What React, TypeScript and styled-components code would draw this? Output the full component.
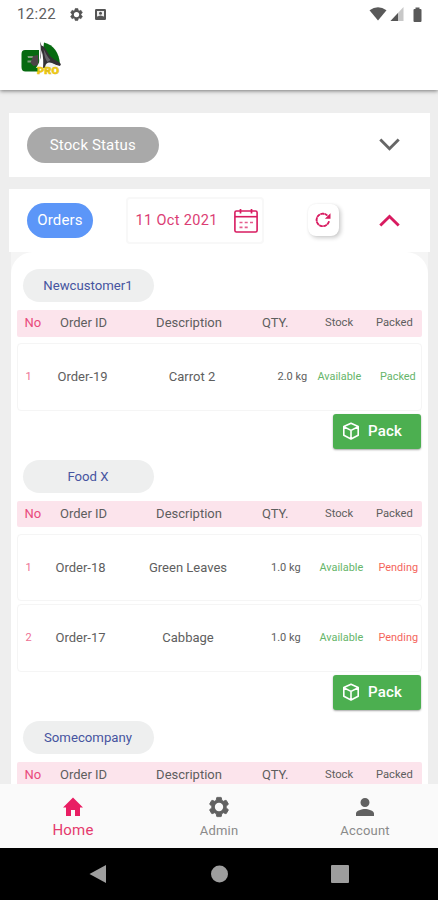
import React from "react";
import styled, { createGlobalStyle } from "styled-components";

const Global = createGlobalStyle`
  * { box-sizing: border-box; }
  body { margin: 0; background: #eee; font-family: Roboto, "Liberation Sans", sans-serif; }
  svg { display: block; flex: none; }
`;

const Screen = styled.div`
  display: flex;
  flex-direction: column;
  width: 438px;
  height: 900px;
  overflow: hidden;
  background: #eeeeee;
`;

const Top = styled.header`
  flex: none;
  height: 90px;
  background: #fff;
  box-shadow: 0 1px 4px rgba(0, 0, 0, 0.5);
`;

const StatusBar = styled.div`
  display: flex;
  align-items: center;
  height: 28px;
  padding: 0 15px 0 17px;
  color: #555;
`;

const Clock = styled.span`
  width: 52px;
  font-size: 15px;
  letter-spacing: 0.35px;
  color: #606060;
`;

const StatusIcons = styled.div<{ $gap: number; $push?: boolean }>`
  display: flex;
  align-items: center;
  gap: ${(p) => p.$gap}px;
  margin-left: ${(p) => (p.$push ? "auto" : "0")};
`;

const Brand = styled.div`
  padding: 12px 0 0 20px;
`;

const Body = styled.main`
  flex: 1;
  min-height: 0;
  overflow: hidden;
  padding: 22.5px 8.5px 0 9px;
  display: flex;
  flex-direction: column;
`;

const Card = styled.section`
  flex: none;
  display: flex;
  align-items: center;
  height: 64.5px;
  padding: 0 30px 0 18px;
  background: #fff;
  justify-content: space-between;
`;

const OrdersBar = styled(Card)`
  margin-top: 11.5px;
  height: 63.5px;
  justify-content: flex-start;
`;

const Pill = styled.span<{ $w: number; $bg: string }>`
  flex: none;
  display: flex;
  align-items: center;
  justify-content: center;
  width: ${(p) => p.$w}px;
  height: 35.5px;
  border-radius: 18px;
  background: ${(p) => p.$bg};
  color: #fff;
  font-size: 15px;
  letter-spacing: 0.15px;
`;

const DateField = styled.div`
  flex: none;
  display: flex;
  align-items: center;
  justify-content: space-between;
  width: 138px;
  height: 47px;
  margin-left: 33px;
  padding: 0 4px 0 7.5px;
  border: 2px solid #f8f8f8;
  border-radius: 4px;
  color: #db3d73;
  font-size: 14.5px;
  letter-spacing: 0.35px;
  white-space: nowrap;
`;

const RefreshButton = styled.button`
  display: flex;
  align-items: center;
  justify-content: center;
  width: 32px;
  height: 32px;
  margin: 0 39.5px 0 43.5px;
  padding: 0;
  border: 0;
  border-radius: 8px;
  background: #fff;
  box-shadow: 2px 2px 4px rgba(0, 0, 0, 0.2), 0 0 2px rgba(0, 0, 0, 0.06);
`;

const ListWrap = styled.section`
  flex: none;
  margin: 0 2px;
  background: linear-gradient(#f5f5f5 0 30px, #fff 30px);
`;

const List = styled.div`
  padding: 17px 6px 0 6px;
  border-radius: 22px 22px 0 0;
  background: #fff;
`;

const Group = styled.div`
  display: flex;
  flex-direction: column;
  padding-bottom: 10.5px;
`;

const Customer = styled.div`
  display: flex;
  align-items: center;
  justify-content: center;
  width: 131px;
  height: 33px;
  margin: 0 0 8px 5.5px;
  border-radius: 17px;
  background: #eeefef;
  color: #4654a0;
  font-size: 13.2px;
`;

const HeadRow = styled.div`
  display: grid;
  grid-template-columns: 35.5px 56px 146px 63px 51px 1fr;
  align-items: center;
  height: 26.5px;
  padding: 0 0 1px 7.5px;
  margin-bottom: 6.5px;
  border-radius: 2px;
  background: #fce4ec;
  white-space: nowrap;
`;

const Row = styled.div<{ $cols: string }>`
  display: grid;
  grid-template-columns: ${(p) => p.$cols};
  align-items: center;
  height: 67.5px;
  margin-bottom: 3px;
  padding-left: 7.5px;
  border: 1.5px solid #f5f5f5;
  border-radius: 4px;
  white-space: nowrap;
`;

const Cell = styled.span<{ $size?: number; $color?: string; $center?: boolean }>`
  font-size: ${(p) => p.$size ?? 13}px;
  color: ${(p) => p.$color ?? "#5e5e5e"};
  text-align: ${(p) => (p.$center ? "center" : "left")};
`;

const PackButton = styled.button`
  align-self: flex-end;
  display: flex;
  align-items: center;
  gap: 8px;
  width: 88px;
  height: 35.5px;
  margin-right: 0.5px;
  padding: 0 0 0 9px;
  border: 0;
  border-radius: 3px;
  background: #4caf50;
  box-shadow: 0 1px 2px rgba(0, 0, 0, 0.35);
  color: #fff;
  font: 500 15px Roboto, sans-serif;
  letter-spacing: 0.2px;
`;

const Tabs = styled.nav`
  flex: none;
  display: grid;
  grid-template-columns: repeat(3, 1fr);
  height: 63.5px;
  background: #fafafa;
`;

const Tab = styled.a<{ $active?: boolean }>`
  display: flex;
  flex-direction: column;
  align-items: center;
  padding-top: 11px;
  gap: ${(p) => (p.$active ? 2.5 : 3)}px;
  color: ${(p) => (p.$active ? "#e53a6e" : "#8a8a8a")};
  font-size: ${(p) => (p.$active ? 15 : 13)}px;
  line-height: 17px;
  letter-spacing: 0.2px;
`;

const SystemNav = styled.footer`
  flex: none;
  display: flex;
  align-items: center;
  height: 52.5px;
  padding-left: 89px;
  background: #000;
`;

const NavKey = styled.svg<{ $after: number }>`
  margin-right: ${(p) => p.$after}px;
`;

const GEAR =
  "M19.14 12.94c.04-.3.06-.61.06-.94 0-.32-.02-.64-.07-.94l2.03-1.58a.49.49 0 0 0 .12-.61l-1.92-3.32a.49.49 0 0 0-.59-.22l-2.39.96c-.5-.38-1.03-.7-1.62-.94l-.36-2.54a.48.48 0 0 0-.48-.41h-3.84c-.24 0-.43.17-.47.41l-.36 2.54c-.59.24-1.13.57-1.62.94l-2.39-.96a.48.48 0 0 0-.59.22L2.74 8.87c-.12.21-.08.47.12.61l2.03 1.58c-.05.3-.09.63-.09.94s.02.64.07.94l-2.03 1.58a.49.49 0 0 0-.12.61l1.92 3.32c.12.22.37.29.59.22l2.39-.96c.5.38 1.03.7 1.62.94l.36 2.54c.05.24.24.41.48.41h3.84c.24 0 .44-.17.47-.41l.36-2.54c.59-.24 1.13-.56 1.62-.94l2.39.96c.22.08.47 0 .59-.22l1.92-3.32a.48.48 0 0 0-.12-.61z";

const Gear = ({ size, color, hole, r }: { size: number; color: string; hole: string; r: number }) => (
  <svg width={size} height={size} viewBox="0 0 24 24">
    <path d={GEAR} fill={color} stroke={color} strokeWidth=".9" />
    <circle cx="12" cy="12" r={r} fill={hole} />
  </svg>
);

const Logo = () => (
  <svg width="42" height="37" viewBox="0 0 42 37">
    <path d="M5 10h14v21.500H5.500Q1.500 31.500 1.500 27V14Q1.500 10 5 10z" fill="#066a10" />
    <path d="M24 2.500C34 5 39 13 40 24L27 23 23 10z" fill="#066a10" />
    <path d="M7.500 16H14l-1 2H8zM7.500 20.500H13l-1 2H7.500z" fill="#7f9f7c" />
    <path d="M18 15l-5 1-2.500 7 3 3 5-1z" fill="#4c4346" />
    <path d="M20 1.500l1.500 4C26 7 27 13 31 17c3 3 7 4 10 7l-1 2-8-2-8 4h-5l1-10c1-5 1-10 0-16.500z" fill="#333135" />
    <path d="M21.500 10c2 7 2 12 1.500 18h-7c3.500-5 5-10 5.500-18z" fill="#fff" />
    <path d="M23.500 9c2 3 3 7 7 11l-3 2c-3-4-3-8-4-13z" fill="#66646a" />
    <path d="M25 27c1-5 4-5 7-4l6 3-1 2z" fill="#f2f2f2" />
    <text x="17" y="34" textLength="22" lengthAdjust="spacingAndGlyphs" fontFamily="Roboto, sans-serif" fontSize="9.5" fontWeight="900" fill="#f4cf14" stroke="#dfba10" strokeWidth=".5">PRO</text>
  </svg>
);

const Chevron = ({ up }: { up?: boolean }) => (
  <svg width="21" height="13" viewBox="0 0 21 13">
    <path d={up ? "M1.3 11.5 10.5 2.5l9.2 9" : "M1.3 1.5 10.5 10.7l9.2-9.2"} fill="none" stroke={up ? "#d81b60" : "#666"} strokeWidth="2.9" />
  </svg>
);

const Calendar = () => (
  <svg width="24" height="25" viewBox="0 0 24 25" fill="none" stroke="#d81b60" strokeWidth="1.6">
    <rect x=".9" y="3" width="22.2" height="21" rx="1.5" />
    <path d="M1 8.7h22" />
    <path d="M6.5 1v4.5M17.5 1v4.5" strokeWidth="1.7" />
    <path d="M5.500 14.500h3M10.700 14.500h3M16 14.500h3M5.500 19.300h3M10.700 19.300h3" strokeWidth="1.700" opacity=".7" />
  </svg>
);

const Refresh = () => (
  <svg width="16" height="16" viewBox="0 0 16 16">
    <path d="M14 9.300A6.300 6.300 0 1 1 12.300 3.500" fill="none" stroke="#d81b60" strokeOpacity=".55" strokeWidth="1.600" />
    <path d="M14 9.300A6.300 6.300 0 1 1 12.300 3.500" fill="none" stroke="#d81b60" strokeWidth="1.700" strokeDasharray="3.500 .8" />
    <path d="M15.500 1.200v5.600H9.900l2-2z" fill="#d81b60" />
  </svg>
);

const Box = () => (
  <svg width="18" height="18" viewBox="0 0 18 18" fill="none" stroke="#fff" strokeWidth="1.6" strokeLinejoin="round">
    <path d="M9 1.200l7.200 3.300v8.800L9 17l-7.200-3.700V4.500zM1.800 4.700 9 8.400l7.200-3.700M9 8.400V17" />
  </svg>
);

type Item = { no: string; id: string; name: string; qty: string; packed: boolean };

const groups: { customer: string; items: Item[] }[] = [
  { customer: "Newcustomer1", items: [{ no: "1", id: "Order-19", name: "Carrot 2", qty: "2.0 kg", packed: true }] },
  {
    customer: "Food X",
    items: [
      { no: "1", id: "Order-18", name: "Green Leaves", qty: "1.0 kg", packed: false },
      { no: "2", id: "Order-17", name: "Cabbage", qty: "1.0 kg", packed: false },
    ],
  },
  { customer: "Somecompany", items: [] },
];

const PACKED_COLS = "32px 49px 171px 40px 62.5px 1fr";
const PENDING_COLS = "30px 49.5px 166px 48.5px 59px 1fr";

const TableHead = () => (
  <HeadRow>
    <Cell $color="#e94a7c">No</Cell>
    <Cell>Order ID</Cell>
    <Cell $center>Description</Cell>
    <Cell>QTY.</Cell>
    <Cell $size={11.2}>Stock</Cell>
    <Cell $size={11.2}>Packed</Cell>
  </HeadRow>
);

export default function App() {
  return (
    <Screen>
      <Global />
      <Top>
        <StatusBar>
          <Clock>12:22</Clock>
          <StatusIcons $gap={11}>
            <Gear size={15} color="#555" hole="#fff" r={4.2} />
            <svg width="11" height="11" viewBox="0 0 11 11">
              <rect width="11" height="11" rx="1.2" fill="#555" />
              <path d="M2 2h7v5.500H2z" fill="#eee" />
              <circle cx="5.500" cy="4.300" r="1.500" fill="#555" />
              <path d="M2 8.200q3.500-3.600 7 0V9H2z" fill="#555" />
            </svg>
          </StatusIcons>
          <StatusIcons $gap={3} $push>
            <svg width="18" height="14" viewBox="0 0 18 14">
              <path d="M.5 3.200Q9-2.600 17.500 3.200L9 13.500z" fill="#595959" />
            </svg>
            <svg width="14" height="14" viewBox="0 0 14 14">
              <path d="M13.500 0v14H.5z" fill="#c8c8c8" />
              <path d="M8 6v8H.5z" fill="#555" />
            </svg>
            <svg width="16" height="15" viewBox="0 0 16 15">
              <path d="M6.500 3q0-1 1-1h1V.5h4V2h1q1 0 1 1v11q0 1-1 1h-6q-1 0-1-1z" fill="#595959" />
            </svg>
          </StatusIcons>
        </StatusBar>
        <Brand>
          <Logo />
        </Brand>
      </Top>
      <Body>
        <Card>
          <Pill $w={131.5} $bg="#a9a9a9">Stock Status</Pill>
          <Chevron />
        </Card>
        <OrdersBar>
          <Pill $w={66} $bg="#5c96f8">Orders</Pill>
          <DateField>
            11 Oct 2021
            <Calendar />
          </DateField>
          <RefreshButton aria-label="Refresh">
            <Refresh />
          </RefreshButton>
          <Chevron up />
        </OrdersBar>
        <ListWrap>
          <List>
            {groups.map((g) => (
              <Group key={g.customer}>
                <Customer>{g.customer}</Customer>
                <TableHead />
                {g.items.map((it) => (
                  <Row key={it.id} $cols={it.packed ? PACKED_COLS : PENDING_COLS}>
                    <Cell $size={11} $color="#ee6f94">{it.no}</Cell>
                    <Cell>{it.id}</Cell>
                    <Cell $center>{it.name}</Cell>
                    <Cell $size={11}>{it.qty}</Cell>
                    <Cell $size={10.9} $color="#66b56a">Available</Cell>
                    <Cell $size={10.9} $color={it.packed ? "#66b56a" : "#f4655c"}>
                      {it.packed ? "Packed" : "Pending"}
                    </Cell>
                  </Row>
                ))}
                {g.items.length > 0 && (
                  <PackButton>
                    <Box />
                    Pack
                  </PackButton>
                )}
              </Group>
            ))}
          </List>
        </ListWrap>
      </Body>
      <Tabs>
        <Tab $active>
          <svg width="24" height="24" viewBox="0 0 24 24" fill="#e91e63">
            <path d="M10 21v-6h4v6h5v-8.500h3L12 2.500 2 12.500h3V21z" />
          </svg>
          Home
        </Tab>
        <Tab>
          <Gear size={24} color="#616161" hole="#fafafa" r={4.2} />
          Admin
        </Tab>
        <Tab>
          <svg width="24" height="24" viewBox="0 0 24 24" fill="#616161">
            <path d="M12 12a4.500 4.500 0 1 0 0-9 4.500 4.500 0 0 0 0 9zm0 2c-3 0-9 1.500-9 4.500V21h18v-2.500c0-3-6-4.500-9-4.500z" />
          </svg>
          Account
        </Tab>
      </Tabs>
      <SystemNav>
        <NavKey $after={105} width="17" height="18" viewBox="0 0 17 18">
          <path d="M17 0v18L.5 9z" fill="#9e9e9e" />
        </NavKey>
        <NavKey $after={103} width="17" height="18" viewBox="0 0 17 18">
          <circle cx="8.500" cy="9" r="8.500" fill="#9e9e9e" />
        </NavKey>
        <NavKey $after={0} width="18" height="18" viewBox="0 0 18 18">
          <rect width="18" height="18" rx="1" fill="#9e9e9e" />
        </NavKey>
      </SystemNav>
    </Screen>
  );
}
